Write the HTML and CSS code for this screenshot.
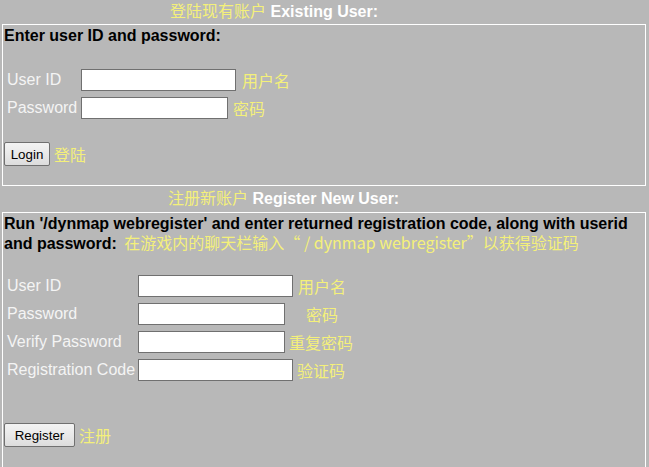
FILE: index.html
```html
<!DOCTYPE html>
<html lang="en">
<head>
<meta charset="utf-8">
<title>Login</title>
<link rel="stylesheet" href="styles.css">
</head>
<body>
<div class="page">
  <div class="heading heading-login"><span class="cn">登陆现有账户</span> Existing User:</div>
  <div class="box box-login">
    <div class="title">Enter user ID and password:</div>
    <div class="rows">
      <div class="row">
        <label class="lbl lbl-short">User ID</label>
        <input class="inp inp-long" type="text">
        <span class="hint hint-wide">用户名</span>
      </div>
      <div class="row">
        <label class="lbl lbl-short">Password</label>
        <input class="inp inp-short" type="password">
        <span class="hint">密码</span>
      </div>
    </div>
    <div class="actions actions-login">
      <button class="btn btn-login" type="button">Login</button>
      <span class="hint hint-btn">登陆</span>
    </div>
  </div>

  <div class="heading heading-register"><span class="cn">注册新账户</span> Register New User:</div>
  <div class="box box-register">
    <div class="title">Run '/dynmap webregister' and enter returned registration code, along with userid and password: <span class="hint hint-inline">在游戏内的聊天栏输入“ / dynmap webregister”以获得验证码</span></div>
    <div class="rows rows-register">
      <div class="row">
        <label class="lbl lbl-long">User ID</label>
        <input class="inp inp-long" type="text">
        <span class="hint">用户名</span>
      </div>
      <div class="row">
        <label class="lbl lbl-long">Password</label>
        <input class="inp inp-short" type="password">
        <span class="hint hint-far">密码</span>
      </div>
      <div class="row">
        <label class="lbl lbl-long">Verify Password</label>
        <input class="inp inp-short" type="password">
        <span class="hint hint-tight">重复密码</span>
      </div>
      <div class="row">
        <label class="lbl lbl-long">Registration Code</label>
        <input class="inp inp-long" type="text">
        <span class="hint hint-tight">验证码</span>
      </div>
    </div>
    <div class="actions actions-register">
      <button class="btn btn-register" type="button">Register</button>
      <span class="hint hint-btn">注册</span>
    </div>
  </div>
</div>
</body>
</html>
```
FILE: styles.css
```css
html, body {
  margin: 0;
  padding: 0;
  height: 467px;
  overflow: hidden;
  background: #b8b8b8;
}

body {
  font-family: "Liberation Sans", Arial, "Noto Sans CJK SC", sans-serif;
  font-size: 16px;
  color: #000;
}

.page {
  padding: 0 3px 0 2px;
}

.heading {
  font-weight: bold;
  color: #fff;
  white-space: nowrap;
}

.heading .cn {
  font-weight: normal;
  color: #f4f07a;
}

.heading-login {
  height: 24px;
  line-height: 24px;
  padding-left: 168px;
}

.heading-register {
  height: 26px;
  line-height: 26px;
  padding-left: 166px;
}

.box {
  border: 1px solid #fff;
  padding-left: 1px;
}

.box-login {
  padding-bottom: 19px;
}

.box-register {
  padding-bottom: 40px;
}

.title {
  font-weight: bold;
  line-height: 20px;
  padding-top: 1px;
}

.rows {
  margin-top: 20px;
}

.rows-register {
  margin-top: 18px;
}

.row {
  display: flex;
  align-items: center;
  height: 28px;
}

.lbl {
  box-sizing: border-box;
  padding-left: 3px;
  color: #f4f4f4;
  white-space: nowrap;
  flex: none;
}

.lbl-short {
  width: 77px;
}

.lbl-long {
  width: 134px;
}

.inp {
  box-sizing: border-box;
  height: 22px;
  margin: 0;
  padding: 0 2px;
  border: 1px solid #707070;
  background: #fff;
  flex: none;
}

.inp-long {
  width: 155px;
}

.inp-short {
  width: 147px;
}

.hint {
  font-family: "Noto Sans CJK SC", "Liberation Sans", sans-serif;
  color: #f4f07a;
  font-weight: normal;
  margin-left: 5px;
  white-space: nowrap;
}

.hint-wide {
  margin-left: 6px;
}

.hint-far {
  margin-left: 21px;
}

.hint-tight {
  margin-left: 4px;
}

.hint-btn {
  margin-left: 4px;
}

.hint-inline {
  margin-left: 3px;
  line-height: 16px;
}

.actions {
  display: flex;
  align-items: center;
}

.actions-login {
  margin-top: 20px;
}

.actions-register {
  margin-top: 39px;
}

.btn {
  box-sizing: border-box;
  height: 24px;
  margin: 0;
  padding: 0;
  border: 1px solid #707070;
  border-radius: 2px;
  background: linear-gradient(#f3f3f3, #e9e9e9 50%, #dcdcdc);
  font-family: "Liberation Sans", Arial, sans-serif;
  font-size: 13.33px;
  color: #000;
  flex: none;
}

.btn-login {
  width: 46px;
}

.btn-register {
  width: 71px;
}
```
